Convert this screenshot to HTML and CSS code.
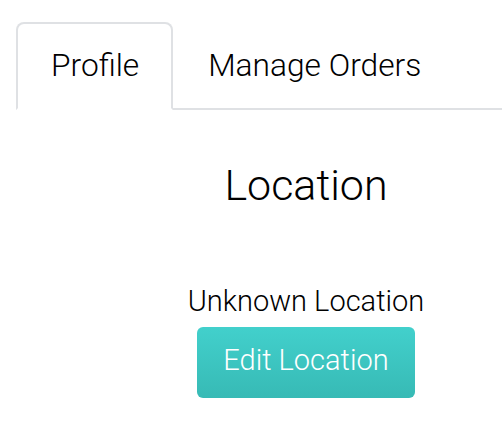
FILE: index.html
```html
<!DOCTYPE html>
<html>
<head>
<meta charset="utf-8">
<link rel="stylesheet" href="styles.css">
</head>
<body>
<ul class="tabs">
  <li class="tab active">Profile</li>
  <li class="tab">Manage Orders</li>
</ul>
<div class="content">
  <h1 class="title">Location</h1>
  <p class="location">Unknown Location</p>
  <button class="btn">Edit Location</button>
</div>
</body>
</html>
```
FILE: styles.css
```css
html, body {
  margin: 0;
  padding: 0;
  background: #ffffff;
}
body {
  font-family: Roboto, "Liberation Sans", sans-serif;
  color: #000000;
  width: 502px;
  height: 440px;
  overflow: hidden;
}
.tabs {
  list-style: none;
  margin: 22px 0 0 16px;
  padding: 0;
  display: flex;
  border-bottom: 2px solid #dfe1e4;
}
.tab {
  font-size: 31.7px;
  font-weight: 300;
  line-height: 34px;
  padding: 25px 32px 25px 33px;
  border: 2px solid transparent;
  border-radius: 8px 8px 0 0;
  margin-bottom: -2px;
  color: #000000;
}
.tab.active {
  border-color: #dfe1e4;
  border-bottom-color: transparent;
  background: #ffffff;
}
.content {
  padding-left: 110px;
  text-align: center;
}
.title {
  font-size: 43px;
  font-weight: 300;
  line-height: 54px;
  margin: 48px 0 0;
}
.location {
  font-size: 29px;
  font-weight: 300;
  line-height: 34px;
  margin: 72px 0 0;
}
.btn {
  display: inline-block;
  margin-top: 9px;
  font-family: Roboto, "Liberation Sans", sans-serif;
  font-size: 29px;
  font-weight: 300;
  line-height: 35px;
  color: #ffffff;
  border: none;
  border-radius: 6px;
  padding: 16px 26px 20px;
  background: linear-gradient(#42d0cc, #37bab5);
}
```
